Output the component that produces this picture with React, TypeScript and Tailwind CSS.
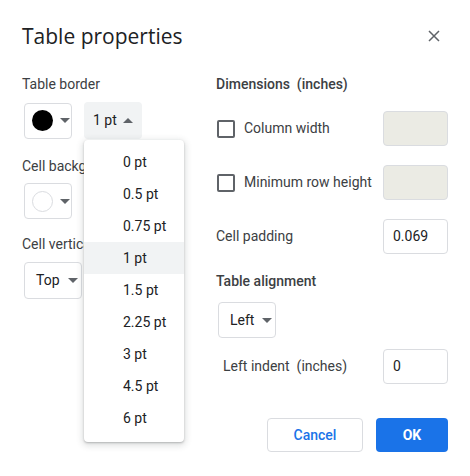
import React from "react";

const sizes = ["0 pt", "0.5 pt", "0.75 pt", "1 pt", "1.5 pt", "2.25 pt", "3 pt", "4.5 pt", "6 pt"];

const Caret = ({ up = false }: { up?: boolean }) => (
  <svg width="10" height="5" viewBox="0 0 10 5" className="shrink-0">
    <path d={up ? "M0 5 L5 0 L10 5 Z" : "M0 0 L5 5 L10 0 Z"} fill="#5f6368" />
  </svg>
);

const Checkbox = () => (
  <div className="w-[18px] h-[18px] rounded-[2px] border-2 border-[#5f6368] shrink-0" />
);

const NumInput = ({ value, disabled }: { value?: string; disabled?: boolean }) => (
  <div
    className={`w-[65px] h-[35px] rounded-[4px] border border-[#dadce0] flex items-center px-[9px] text-[14px] text-[#202124] ${
      disabled ? "bg-[#ebebe4]" : "bg-white"
    }`}
  >
    {value}
  </div>
);

export default function App() {
  return (
    <div
      className="relative w-[470px] h-[476px] bg-white text-[#3c4043]"
      style={{ fontFamily: "Roboto, 'Liberation Sans', sans-serif" }}
    >
      {/* header */}
      <div className="flex items-center justify-between pt-[22px] pl-[22px] pr-[30px]">
        <h1
          className="text-[21px] leading-[28px] text-[#202124]"
          style={{ fontFamily: "'Open Sans', Roboto, sans-serif" }}
        >
          Table properties
        </h1>
        <svg width="12" height="12" viewBox="0 0 12 12">
          <path d="M1 1 L11 11 M11 1 L1 11" stroke="#5f6368" strokeWidth="1.5" />
        </svg>
      </div>

      <div className="flex pl-[22px] pt-[24px]">
        {/* left column */}
        <div className="w-[194px] flex flex-col text-[14px]">
          <div className="leading-[20px] text-[#3c4043]">Table border</div>
          <div className="flex items-center gap-[12px] mt-[8px] ml-[2px]">
            <div className="w-[48px] h-[36px] rounded-[4px] border border-[#dadce0] flex items-center pl-[7px] gap-[7px]">
              <div className="w-[21px] h-[21px] rounded-full bg-black" />
              <Caret />
            </div>
            <div className="relative w-[58px] h-[37px] rounded-[4px] bg-[#f1f3f4] flex items-center pl-[9px] gap-[6px] text-[#202124]">
              1 pt
              <Caret up />
              {/* open menu, lies over the left labels */}
              <div className="absolute left-0 top-[38px] w-[100px] bg-white rounded-[4px] shadow-[0_2px_6px_2px_rgba(60,64,67,0.15),0_1px_2px_0_rgba(60,64,67,0.3)] pt-[6px] pb-[8px] z-10">
                {sizes.map((s) => (
                  <div
                    key={s}
                    className={`h-[32px] flex items-center pl-[39px] text-[14px] text-[#202124] ${
                      s === "1 pt" ? "bg-[#f1f3f4]" : ""
                    }`}
                  >
                    {s}
                  </div>
                ))}
              </div>
            </div>
          </div>

          <div className="leading-[20px] mt-[17px] whitespace-nowrap">Cell background color</div>
          <div className="mt-[7px] ml-[2px] w-[48px] h-[36px] rounded-[4px] border border-[#dadce0] flex items-center pl-[7px] gap-[7px]">
            <div className="w-[21px] h-[21px] rounded-full bg-white border border-[#dadce0]" />
            <Caret />
          </div>

          <div className="leading-[20px] mt-[15px] whitespace-nowrap">Cell vertical alignment</div>
          <div className="mt-[8px] ml-[2px] w-[58px] h-[37px] rounded-[4px] border border-[#dadce0] flex items-center pl-[11px] gap-[8px] text-[#202124]">
            Top
            <Caret />
          </div>
        </div>

        {/* right column */}
        <div className="w-[232px] flex flex-col text-[14px]">
          <div className="leading-[20px] font-medium text-[#3c4043]">Dimensions&nbsp; (inches)</div>

          <div className="flex items-center justify-between mt-[17px]">
            <div className="flex items-center gap-[9px] pl-[1px]">
              <Checkbox />
              <span>Column width</span>
            </div>
            <NumInput disabled />
          </div>

          <div className="flex items-center justify-between mt-[19px]">
            <div className="flex items-center gap-[9px] pl-[1px]">
              <Checkbox />
              <span>Minimum row height</span>
            </div>
            <NumInput disabled />
          </div>

          <div className="flex items-center justify-between mt-[19px]">
            <span>Cell padding</span>
            <NumInput value="0.069" />
          </div>

          <div className="leading-[20px] font-medium mt-[17px]">Table alignment</div>
          <div className="mt-[11px] ml-[2px] w-[58px] h-[36px] rounded-[4px] border border-[#dadce0] flex items-center pl-[11px] gap-[8px] text-[#202124]">
            Left
            <Caret />
          </div>

          <div className="flex items-center justify-between mt-[11px]">
            <span className="pl-[7px]">Left indent&nbsp; (inches)</span>
            <NumInput value="0" />
          </div>

          <div className="flex justify-end gap-[13px] mt-[34px]">
            <button className="w-[96px] h-[34px] rounded-[4px] border border-[#dadce0] text-[#1a73e8] font-medium text-[14px] bg-white">
              Cancel
            </button>
            <button className="w-[72px] h-[34px] rounded-[4px] bg-[#1a73e8] text-white font-bold text-[14px]">
              OK
            </button>
          </div>
        </div>
      </div>
    </div>
  );
}
